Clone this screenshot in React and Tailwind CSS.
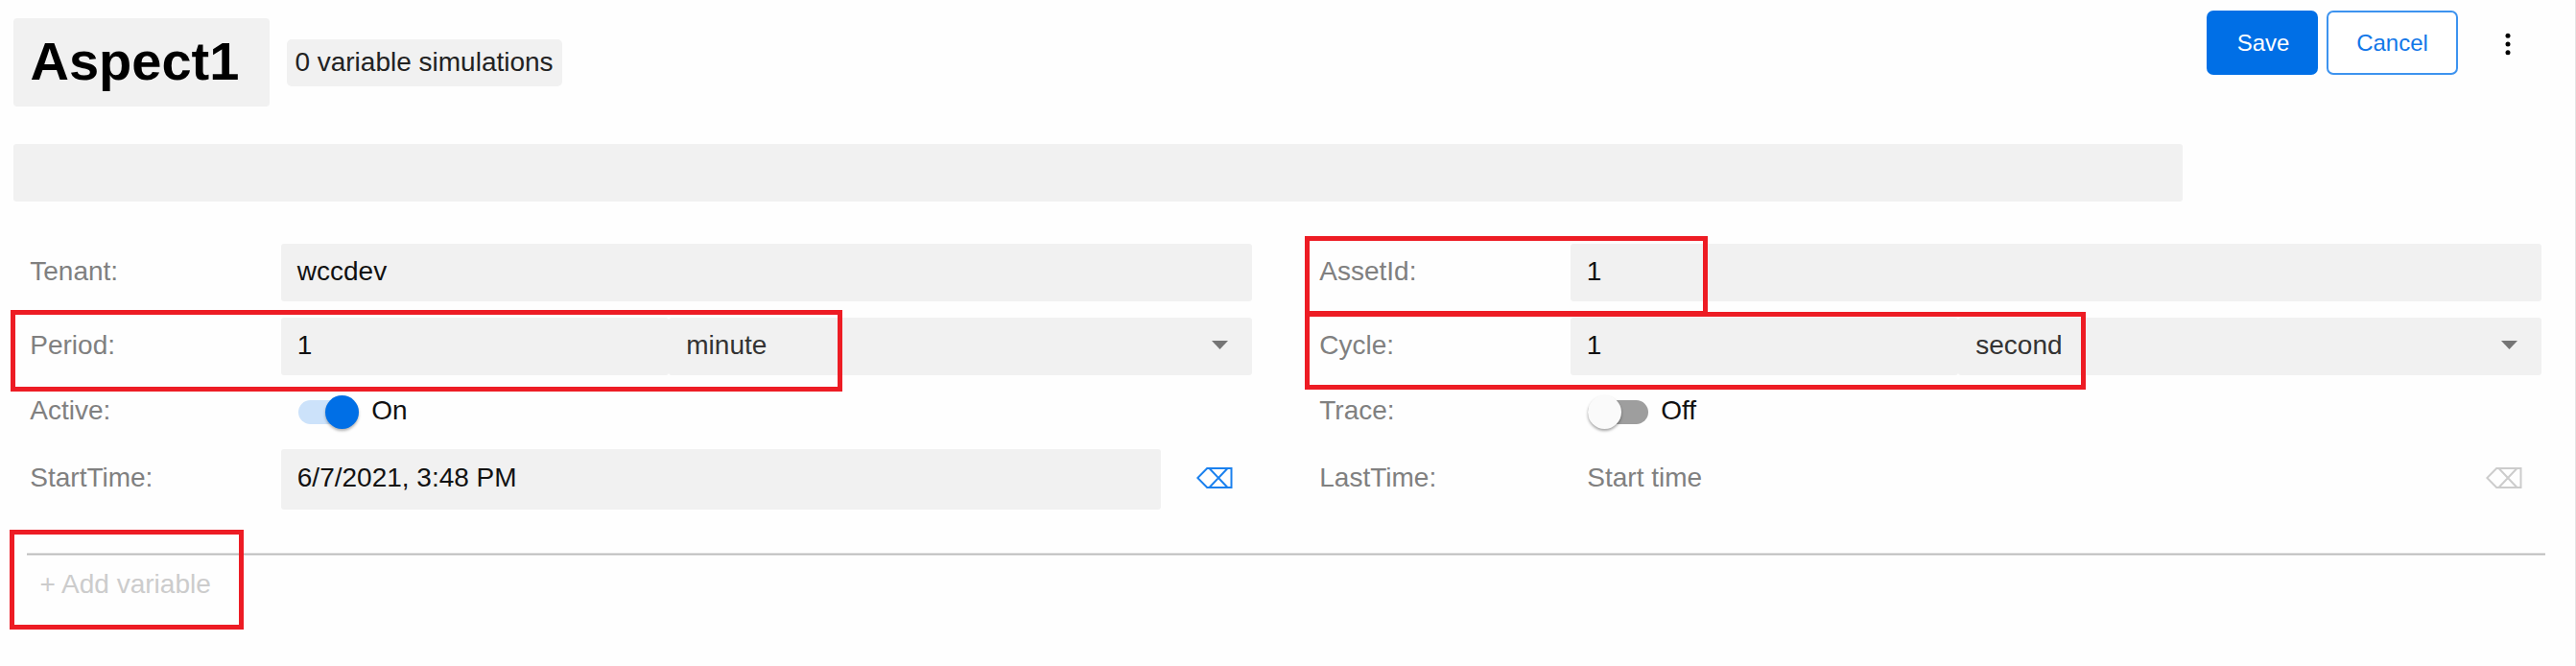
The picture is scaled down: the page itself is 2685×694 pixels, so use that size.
const FIELD = 'bg-[#f1f1f1] rounded-[3px] flex items-center whitespace-pre pb-[2px]';

function Label({ children }) {
  return <div className="w-[262px] shrink-0 pb-[2px] text-[#808080]">{children}</div>;
}

function Row({ label, className, children }) {
  return (
    <div className={`flex w-[1274px] items-center ${className}`}>
      <Label>{label}</Label>
      <div className="flex h-full min-w-0 flex-1 items-center">{children}</div>
    </div>
  );
}

function TextField({ value }) {
  return <div className={`${FIELD} h-full flex-1 pl-[16.5px] text-[#111]`}>{value}</div>;
}

function UnitField({ value, unit }) {
  return (
    <>
      <div className={`${FIELD} h-full w-[404px] pl-[16.5px] text-[#111]`}>{value}</div>
      <div className={`${FIELD} h-full flex-1 justify-between pl-[18px] pr-[25px] text-[#333]`}>
        {unit}
        <svg width="17" height="9" viewBox="0 0 17 9" fill="#757575">
          <path d="M0 0h17L8.5 9z" />
        </svg>
      </div>
    </>
  );
}

function Toggle({ on }) {
  return (
    <div className="flex items-center pl-[17.5px]">
      <div
        className={
          on
            ? 'flex h-[25px] w-[63px] items-center justify-end rounded-full bg-[#cce2fa]'
            : 'flex h-[25px] w-[63px] items-center rounded-full bg-[#9e9e9e]'
        }
      >
        <div
          className={
            on
              ? 'size-[35px] shrink-0 rounded-full bg-[#006fe6] shadow-[0_2px_3px_rgba(0,0,0,0.3)]'
              : 'size-[35px] shrink-0 rounded-full bg-[#fafafa] shadow-[0_2px_3px_rgba(0,0,0,0.35)]'
          }
        />
      </div>
      <span className="pb-[2px] pl-[13.5px] text-[#111]">{on ? 'On' : 'Off'}</span>
    </div>
  );
}

function Erase({ className }) {
  return (
    <svg className={`mb-[3px] shrink-0 ${className}`} width="38" height="22" viewBox="0 0 38 22" fill="none" stroke="currentColor" strokeWidth="2">
      <path d="M11.2 1H36.5v20H11.2L1.3 11z" />
      <path d="M13.5 1l19 20M32.5 1l-19 20" />
    </svg>
  );
}

export default function App() {
  return (
    <div className="relative flex h-[694px] w-[2685px] flex-col overflow-hidden border-r border-[#e4e4e4] bg-[#fefefe] font-['Liberation_Sans',Arial,sans-serif] text-[28px] leading-[32px]">
      <header className="flex h-[149.5px] items-start pl-[13.5px]">
        <h1 className="mt-[18.5px] flex h-[92.5px] w-[267.5px] items-center rounded-[4px] bg-[#f1f1f1] pb-[2px] pl-[18px] text-[56px] font-bold text-black">
          Aspect1
        </h1>
        <div className="ml-[17.5px] mt-[41px] flex h-[49px] w-[287px] items-center justify-center whitespace-nowrap rounded-[5px] bg-[#f1f1f1] pb-px text-[#222]">
          0 variable simulations
        </div>
        <div className="ml-auto mt-[11.3px] flex items-center pr-[67px] text-[24px]">
          <button className="h-[67px] w-[116px] rounded-[7px] bg-[#006fe6] pl-[2px] text-white">Save</button>
          <button className="ml-[9px] h-[67px] w-[137px] rounded-[7px] border-2 border-[#3d93ef] bg-white text-[#1277e8]">
            Cancel
          </button>
          <svg className="ml-[49px] mt-[2px]" width="6" height="24" viewBox="0 0 6 24" fill="#000">
            <circle cx="3" cy="3.2" r="2.5" />
            <circle cx="3" cy="12" r="2.5" />
            <circle cx="3" cy="20.8" r="2.5" />
          </svg>
        </div>
      </header>

      <div className="ml-[13.5px] h-[60px] w-[2261px] shrink-0 rounded-[3px] bg-[#f1f1f1]" />

      <main className="grid grid-cols-[1274px_1274px] gap-x-[70px] pl-[31.3px] pt-[44.7px]">
        <Row label="Tenant:" className="h-[59.5px]">
          <TextField value="wccdev" />
        </Row>
        <Row label="AssetId:" className="h-[59.5px]">
          <TextField value="1" />
        </Row>
        <Row label="Period:" className="mt-[17.5px] h-[59.5px]">
          <UnitField value="1" unit="minute" />
        </Row>
        <Row label="Cycle:" className="mt-[17.5px] h-[59.5px]">
          <UnitField value="1" unit="second" />
        </Row>
        <Row label="Active:" className="h-[77px]">
          <Toggle on />
        </Row>
        <Row label="Trace:" className="h-[77px]">
          <Toggle />
        </Row>
        <Row label="StartTime:" className="h-[63px]">
          <TextField value="6/7/2021, 3:48 PM" />
          <Erase className="ml-[36.5px] mr-[20.5px] text-[#1a80ee]" />
        </Row>
        <Row label="LastTime:" className="h-[63px]">
          <span className="flex-1 pb-[2px] pl-[17px] text-[#808080]">Start time</span>
          <Erase className="mr-[20.5px] text-[#ccc]" />
        </Row>
      </main>

      <hr className="ml-[27.5px] mt-[45.3px] h-[3px] w-[2625px] shrink-0 border-0 border-y border-[#dedede] bg-[#bdbdbd]" />
      <div className="pl-[41.5px] pt-[14px] text-[#ccc]">+ Add variable</div>

      <div className="absolute left-[11px] top-[323px] h-[85px] w-[867px] border-5 border-[#ed1c24]" />
      <div className="absolute left-[1360px] top-[246px] h-[83px] w-[420px] border-5 border-[#ed1c24]" />
      <div className="absolute left-[1360px] top-[325px] h-[81px] w-[814px] border-5 border-[#ed1c24]" />
      <div className="absolute left-[10px] top-[552px] h-[104px] w-[244px] border-5 border-[#ed1c24]" />
    </div>
  );
}
